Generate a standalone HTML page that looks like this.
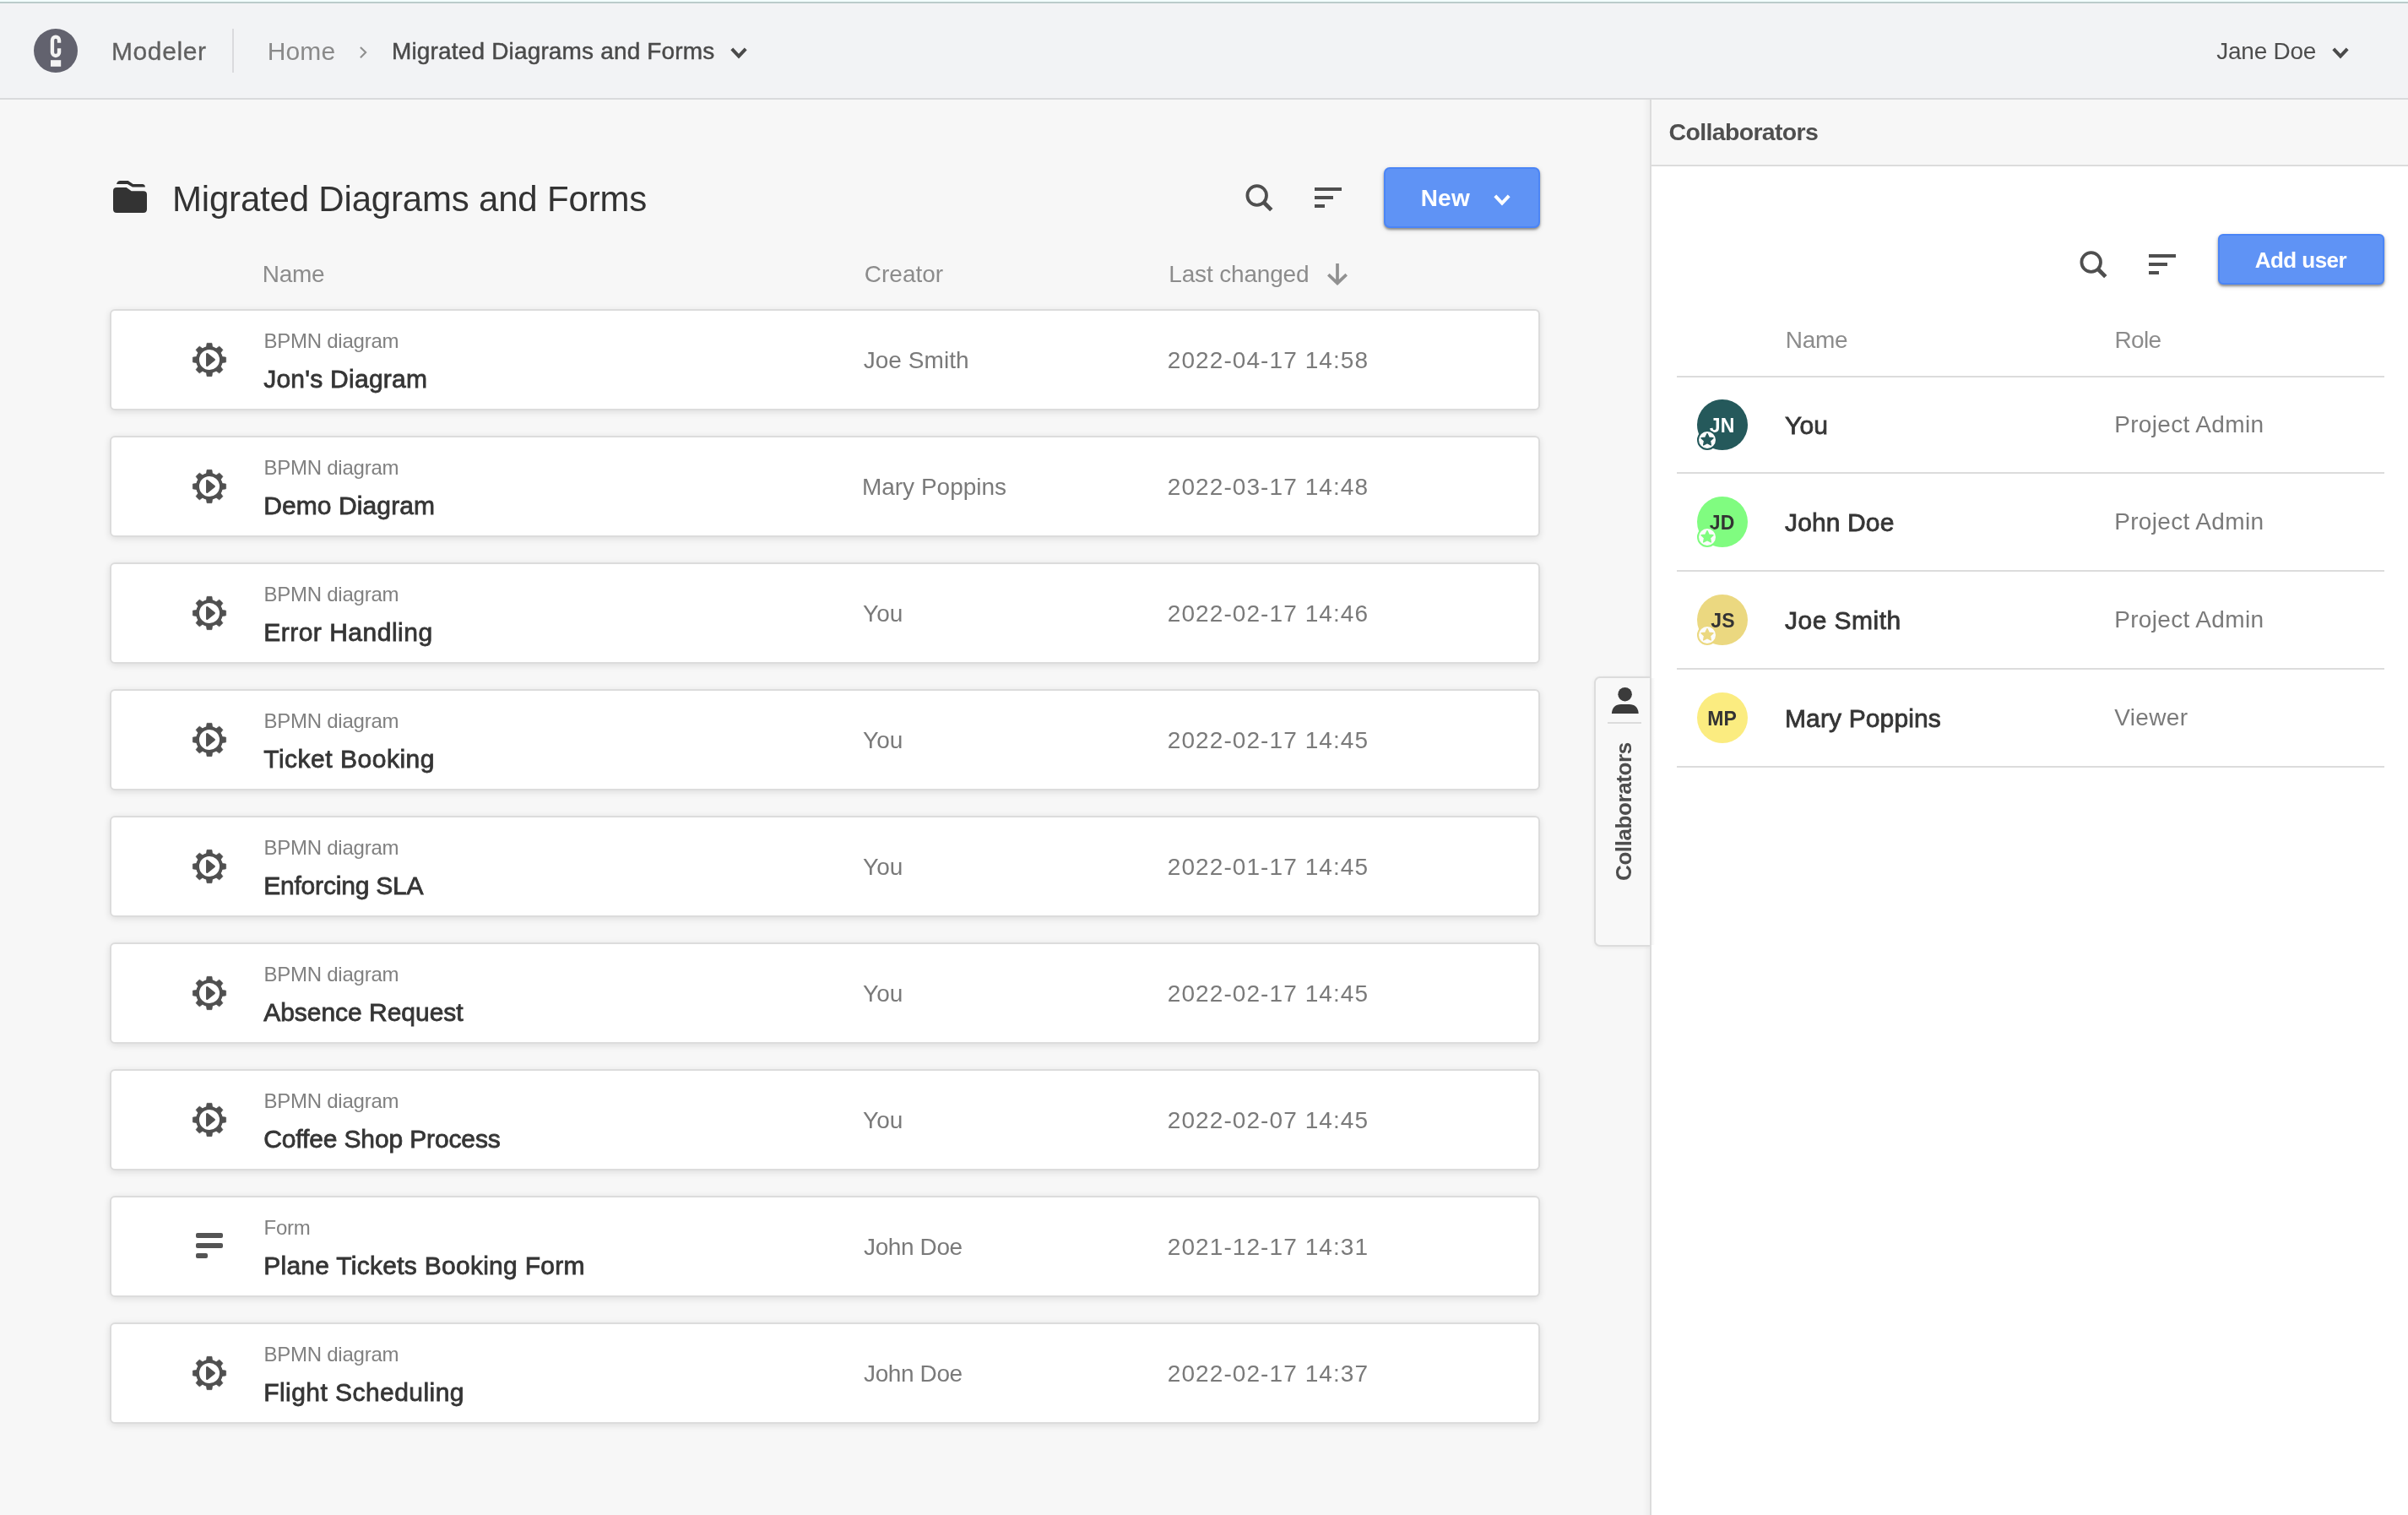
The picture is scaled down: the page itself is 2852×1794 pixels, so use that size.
<!DOCTYPE html>
<html lang="en"><head><meta charset="utf-8"><title>Modeler - Migrated Diagrams and Forms</title>
<style>
html,body{margin:0;padding:0}
body{width:2852px;height:1794px;position:relative;overflow:hidden;background:#f7f7f7;font-family:"Liberation Sans", sans-serif;}
.t{position:absolute;white-space:pre;line-height:1;}
.ic{position:absolute;display:block;overflow:visible}
.abs{position:absolute}
.card{position:absolute;left:130px;width:1694px;height:120px;box-sizing:border-box;background:#fff;border:2px solid #dcdcdc;border-radius:6px;box-shadow:0 2px 8px rgba(0,0,0,0.11);}
.btn{position:absolute;box-sizing:border-box;background:#5f93f5;border:2px solid #4b85f6;border-radius:6px;box-shadow:0 2px 3px rgba(0,0,0,0.40), 0 2px 7px rgba(0,0,0,0.12);}
.av{position:absolute;width:60px;height:60px;border-radius:50%;}
.bd{position:absolute;width:24px;height:24px;border-radius:50%;background:#fcfcfc;box-sizing:border-box;}
.hl{position:absolute;left:1986px;width:838px;height:2px;background:#dcdcdc}
#app{position:absolute;left:0;top:0;width:2852px;height:1794px;overflow:hidden;will-change:transform}
</style></head><body><div id="app">

<div class="abs" style="left:0;top:0;width:2852px;height:2px;background:#f3fffe"></div>
<div class="abs" style="left:0;top:2px;width:2852px;height:2px;background:#bbcbcb"></div>
<div class="abs" style="left:0;top:4px;width:2852px;height:112px;background:#f2f3f5"></div>
<div class="abs" style="left:0;top:116px;width:2852px;height:2px;background:#d9dadc"></div>
<div class="abs" style="left:40px;top:34px;width:52px;height:52px;border-radius:50%;background:#62626e"></div>
<svg class="ic" style="left:40px;top:34px" width="52" height="52" viewBox="0 0 52 52"><path d="M30.06,16.8 V13.73 A4.06,4.06 0 0 0 21.94,13.73 V27.96 A4.06,4.06 0 0 0 30.06,27.96 V23.3" fill="none" stroke="#f4f4f4" stroke-width="4.36"/><rect x="20" y="37.2" width="12.2" height="7.6" fill="#f4f4f4"/></svg>
<div class="t" style="left:132px;top:45.61px;font-size:30px;color:#606060;font-weight:400;letter-spacing:0.6px;-webkit-text-stroke:0.3px #606060;">Modeler</div>
<div class="abs" style="left:275px;top:34px;width:2px;height:52px;background:#dadadd"></div>
<div class="t" style="left:316.8px;top:45.61px;font-size:30px;color:#8a8a8a;font-weight:400;letter-spacing:0.1px;">Home</div>
<svg class="ic" style="left:424px;top:55px" width="12" height="16" viewBox="0 0 12 16"><path d="M2.9,0.9 L9.15,7.05 L2.9,13.2" fill="none" stroke="#8f8f8f" stroke-width="2.1"/></svg>
<div class="t" style="left:464px;top:46.80px;font-size:28px;color:#4a4a4a;font-weight:400;letter-spacing:0.16px;-webkit-text-stroke:0.45px #4a4a4a;">Migrated Diagrams and Forms</div>
<svg class="ic" style="left:863.5px;top:55px" width="22" height="14.5" viewBox="0 0 22 14.5"><path d="M2.80,2.80 L11.0,11.50 L19.20,2.80" fill="none" stroke="#4a4a4a" stroke-width="4" stroke-linejoin="miter"/></svg>
<div class="t" style="left:2625.3px;top:46.80px;font-size:28px;color:#4d4d4d;font-weight:400;letter-spacing:-0.25px;">Jane Doe</div>
<svg class="ic" style="left:2760.5px;top:55px" width="22" height="14.5" viewBox="0 0 22 14.5"><path d="M2.80,2.80 L11.0,11.50 L19.20,2.80" fill="none" stroke="#4a4a4a" stroke-width="4" stroke-linejoin="miter"/></svg>
<svg class="ic" style="left:134px;top:214px" width="40" height="38" viewBox="0 0 40 38"><path d="M4.06,3.9 Q4.9,0.1 8.6,0.1 H17.7 L23.66,4.06 H34.4 Q37.9,4.06 37.9,7.6 H22.87 L16.9,3.9 Z" fill="#333"/><path d="M0,12.2 Q0,8 4.2,8 H15.7 L21.7,12.2 H35.8 Q40,12.2 40,16.4 V33.8 Q40,38 35.8,38 H4.2 Q0,38 0,33.8 Z" fill="#333"/></svg>
<div class="t" style="left:204px;top:214.75px;font-size:42px;color:#333;font-weight:400;letter-spacing:-0.19px;">Migrated Diagrams and Forms</div>
<svg class="ic" style="left:1474.5px;top:217.5px" width="33" height="33" viewBox="0 0 33 33"><circle cx="13.7" cy="13.5" r="11.3" fill="none" stroke="#4f4f4f" stroke-width="3.8"/><path d="M21.4,21.2 L30.8,30.6" stroke="#4f4f4f" stroke-width="4.8" stroke-linecap="butt"/></svg>
<svg class="ic" style="left:1557px;top:222px" width="32" height="24" viewBox="0 0 32 24"><g fill="#4f4f4f"><rect x="0" y="0" width="32" height="4"/><rect x="0" y="10" width="22" height="4"/><rect x="0" y="20" width="12" height="4"/></g></svg>
<div class="btn" style="left:1639px;top:198px;width:185px;height:72px;border-radius:7px"></div>
<div class="t" style="left:1682.7px;top:220.50px;font-size:28px;color:#fff;font-weight:700;letter-spacing:0.2px;">New</div>
<svg class="ic" style="left:1768.3px;top:229px" width="22" height="14.5" viewBox="0 0 22 14.5"><path d="M2.80,2.80 L11.0,11.50 L19.20,2.80" fill="none" stroke="#fff" stroke-width="4" stroke-linejoin="miter"/></svg>
<div class="t" style="left:310.8px;top:311.00px;font-size:28px;color:#8c8c8c;font-weight:400;letter-spacing:-0.3px;">Name</div>
<div class="t" style="left:1023.8px;top:311.00px;font-size:28px;color:#8c8c8c;font-weight:400;">Creator</div>
<div class="t" style="left:1384.3px;top:311.00px;font-size:28px;color:#8c8c8c;font-weight:400;letter-spacing:-0.17px;">Last changed</div>
<svg class="ic" style="left:1571px;top:312px" width="26" height="26" viewBox="0 0 26 26"><path d="M13,0.05 V22 M2.3,13.1 L13,23.4 L23.7,13.1" fill="none" stroke="#919191" stroke-width="3.7"/></svg>
<div class="card" style="top:366px"></div>
<svg class="ic" style="left:228px;top:406px" width="40" height="40" viewBox="-20 -20 40 40"><g fill="#505050"><path transform="rotate(0)" d="M-2.6,-19.65 h5.2 q0.35,0 0.42,0.35 l0.68,4.6 h-7.4 l0.68,-4.6 q0.07,-0.35 0.42,-0.35z" stroke="#505050" stroke-width="0.6" stroke-linejoin="round"/><path transform="rotate(45)" d="M-2.6,-19.65 h5.2 q0.35,0 0.42,0.35 l0.68,4.6 h-7.4 l0.68,-4.6 q0.07,-0.35 0.42,-0.35z" stroke="#505050" stroke-width="0.6" stroke-linejoin="round"/><path transform="rotate(90)" d="M-2.6,-19.65 h5.2 q0.35,0 0.42,0.35 l0.68,4.6 h-7.4 l0.68,-4.6 q0.07,-0.35 0.42,-0.35z" stroke="#505050" stroke-width="0.6" stroke-linejoin="round"/><path transform="rotate(135)" d="M-2.6,-19.65 h5.2 q0.35,0 0.42,0.35 l0.68,4.6 h-7.4 l0.68,-4.6 q0.07,-0.35 0.42,-0.35z" stroke="#505050" stroke-width="0.6" stroke-linejoin="round"/><path transform="rotate(180)" d="M-2.6,-19.65 h5.2 q0.35,0 0.42,0.35 l0.68,4.6 h-7.4 l0.68,-4.6 q0.07,-0.35 0.42,-0.35z" stroke="#505050" stroke-width="0.6" stroke-linejoin="round"/><path transform="rotate(225)" d="M-2.6,-19.65 h5.2 q0.35,0 0.42,0.35 l0.68,4.6 h-7.4 l0.68,-4.6 q0.07,-0.35 0.42,-0.35z" stroke="#505050" stroke-width="0.6" stroke-linejoin="round"/><path transform="rotate(270)" d="M-2.6,-19.65 h5.2 q0.35,0 0.42,0.35 l0.68,4.6 h-7.4 l0.68,-4.6 q0.07,-0.35 0.42,-0.35z" stroke="#505050" stroke-width="0.6" stroke-linejoin="round"/><path transform="rotate(315)" d="M-2.6,-19.65 h5.2 q0.35,0 0.42,0.35 l0.68,4.6 h-7.4 l0.68,-4.6 q0.07,-0.35 0.42,-0.35z" stroke="#505050" stroke-width="0.6" stroke-linejoin="round"/></g><circle r="14" fill="none" stroke="#505050" stroke-width="3.9"/><path d="M-2.7,-6.8 L5.7,0 L-2.7,6.8 Z" fill="#505050" stroke="#505050" stroke-width="2.5" stroke-linejoin="round"/></svg>
<div class="t" style="left:312.5px;top:392.28px;font-size:24px;color:#808080;font-weight:400;letter-spacing:-0.25px;">BPMN diagram</div>
<div class="t" style="left:312.2px;top:433.61px;font-size:30px;color:#353535;font-weight:400;letter-spacing:0.25px;-webkit-text-stroke:0.8px #353535;">Jon's Diagram</div>
<div class="t" style="left:1022.7px;top:413.00px;font-size:28px;color:#7a7a7a;font-weight:400;letter-spacing:0.05px;">Joe Smith</div>
<div class="t" style="left:1382.8px;top:413.00px;font-size:28px;color:#7a7a7a;font-weight:400;letter-spacing:1.08px;">2022-04-17 14:58</div>
<div class="card" style="top:516px"></div>
<svg class="ic" style="left:228px;top:556px" width="40" height="40" viewBox="-20 -20 40 40"><g fill="#505050"><path transform="rotate(0)" d="M-2.6,-19.65 h5.2 q0.35,0 0.42,0.35 l0.68,4.6 h-7.4 l0.68,-4.6 q0.07,-0.35 0.42,-0.35z" stroke="#505050" stroke-width="0.6" stroke-linejoin="round"/><path transform="rotate(45)" d="M-2.6,-19.65 h5.2 q0.35,0 0.42,0.35 l0.68,4.6 h-7.4 l0.68,-4.6 q0.07,-0.35 0.42,-0.35z" stroke="#505050" stroke-width="0.6" stroke-linejoin="round"/><path transform="rotate(90)" d="M-2.6,-19.65 h5.2 q0.35,0 0.42,0.35 l0.68,4.6 h-7.4 l0.68,-4.6 q0.07,-0.35 0.42,-0.35z" stroke="#505050" stroke-width="0.6" stroke-linejoin="round"/><path transform="rotate(135)" d="M-2.6,-19.65 h5.2 q0.35,0 0.42,0.35 l0.68,4.6 h-7.4 l0.68,-4.6 q0.07,-0.35 0.42,-0.35z" stroke="#505050" stroke-width="0.6" stroke-linejoin="round"/><path transform="rotate(180)" d="M-2.6,-19.65 h5.2 q0.35,0 0.42,0.35 l0.68,4.6 h-7.4 l0.68,-4.6 q0.07,-0.35 0.42,-0.35z" stroke="#505050" stroke-width="0.6" stroke-linejoin="round"/><path transform="rotate(225)" d="M-2.6,-19.65 h5.2 q0.35,0 0.42,0.35 l0.68,4.6 h-7.4 l0.68,-4.6 q0.07,-0.35 0.42,-0.35z" stroke="#505050" stroke-width="0.6" stroke-linejoin="round"/><path transform="rotate(270)" d="M-2.6,-19.65 h5.2 q0.35,0 0.42,0.35 l0.68,4.6 h-7.4 l0.68,-4.6 q0.07,-0.35 0.42,-0.35z" stroke="#505050" stroke-width="0.6" stroke-linejoin="round"/><path transform="rotate(315)" d="M-2.6,-19.65 h5.2 q0.35,0 0.42,0.35 l0.68,4.6 h-7.4 l0.68,-4.6 q0.07,-0.35 0.42,-0.35z" stroke="#505050" stroke-width="0.6" stroke-linejoin="round"/></g><circle r="14" fill="none" stroke="#505050" stroke-width="3.9"/><path d="M-2.7,-6.8 L5.7,0 L-2.7,6.8 Z" fill="#505050" stroke="#505050" stroke-width="2.5" stroke-linejoin="round"/></svg>
<div class="t" style="left:312.5px;top:542.28px;font-size:24px;color:#808080;font-weight:400;letter-spacing:-0.25px;">BPMN diagram</div>
<div class="t" style="left:312.2px;top:583.61px;font-size:30px;color:#353535;font-weight:400;letter-spacing:0.09999999999999999px;-webkit-text-stroke:0.8px #353535;">Demo Diagram</div>
<div class="t" style="left:1020.9px;top:563.00px;font-size:28px;color:#7a7a7a;font-weight:400;">Mary Poppins</div>
<div class="t" style="left:1382.8px;top:563.00px;font-size:28px;color:#7a7a7a;font-weight:400;letter-spacing:1.08px;">2022-03-17 14:48</div>
<div class="card" style="top:666px"></div>
<svg class="ic" style="left:228px;top:706px" width="40" height="40" viewBox="-20 -20 40 40"><g fill="#505050"><path transform="rotate(0)" d="M-2.6,-19.65 h5.2 q0.35,0 0.42,0.35 l0.68,4.6 h-7.4 l0.68,-4.6 q0.07,-0.35 0.42,-0.35z" stroke="#505050" stroke-width="0.6" stroke-linejoin="round"/><path transform="rotate(45)" d="M-2.6,-19.65 h5.2 q0.35,0 0.42,0.35 l0.68,4.6 h-7.4 l0.68,-4.6 q0.07,-0.35 0.42,-0.35z" stroke="#505050" stroke-width="0.6" stroke-linejoin="round"/><path transform="rotate(90)" d="M-2.6,-19.65 h5.2 q0.35,0 0.42,0.35 l0.68,4.6 h-7.4 l0.68,-4.6 q0.07,-0.35 0.42,-0.35z" stroke="#505050" stroke-width="0.6" stroke-linejoin="round"/><path transform="rotate(135)" d="M-2.6,-19.65 h5.2 q0.35,0 0.42,0.35 l0.68,4.6 h-7.4 l0.68,-4.6 q0.07,-0.35 0.42,-0.35z" stroke="#505050" stroke-width="0.6" stroke-linejoin="round"/><path transform="rotate(180)" d="M-2.6,-19.65 h5.2 q0.35,0 0.42,0.35 l0.68,4.6 h-7.4 l0.68,-4.6 q0.07,-0.35 0.42,-0.35z" stroke="#505050" stroke-width="0.6" stroke-linejoin="round"/><path transform="rotate(225)" d="M-2.6,-19.65 h5.2 q0.35,0 0.42,0.35 l0.68,4.6 h-7.4 l0.68,-4.6 q0.07,-0.35 0.42,-0.35z" stroke="#505050" stroke-width="0.6" stroke-linejoin="round"/><path transform="rotate(270)" d="M-2.6,-19.65 h5.2 q0.35,0 0.42,0.35 l0.68,4.6 h-7.4 l0.68,-4.6 q0.07,-0.35 0.42,-0.35z" stroke="#505050" stroke-width="0.6" stroke-linejoin="round"/><path transform="rotate(315)" d="M-2.6,-19.65 h5.2 q0.35,0 0.42,0.35 l0.68,4.6 h-7.4 l0.68,-4.6 q0.07,-0.35 0.42,-0.35z" stroke="#505050" stroke-width="0.6" stroke-linejoin="round"/></g><circle r="14" fill="none" stroke="#505050" stroke-width="3.9"/><path d="M-2.7,-6.8 L5.7,0 L-2.7,6.8 Z" fill="#505050" stroke="#505050" stroke-width="2.5" stroke-linejoin="round"/></svg>
<div class="t" style="left:312.5px;top:692.28px;font-size:24px;color:#808080;font-weight:400;letter-spacing:-0.25px;">BPMN diagram</div>
<div class="t" style="left:312.2px;top:733.61px;font-size:30px;color:#353535;font-weight:400;letter-spacing:0.5px;-webkit-text-stroke:0.8px #353535;">Error Handling</div>
<div class="t" style="left:1022.1px;top:713.00px;font-size:28px;color:#7a7a7a;font-weight:400;">You</div>
<div class="t" style="left:1382.8px;top:713.00px;font-size:28px;color:#7a7a7a;font-weight:400;letter-spacing:1.08px;">2022-02-17 14:46</div>
<div class="card" style="top:816px"></div>
<svg class="ic" style="left:228px;top:856px" width="40" height="40" viewBox="-20 -20 40 40"><g fill="#505050"><path transform="rotate(0)" d="M-2.6,-19.65 h5.2 q0.35,0 0.42,0.35 l0.68,4.6 h-7.4 l0.68,-4.6 q0.07,-0.35 0.42,-0.35z" stroke="#505050" stroke-width="0.6" stroke-linejoin="round"/><path transform="rotate(45)" d="M-2.6,-19.65 h5.2 q0.35,0 0.42,0.35 l0.68,4.6 h-7.4 l0.68,-4.6 q0.07,-0.35 0.42,-0.35z" stroke="#505050" stroke-width="0.6" stroke-linejoin="round"/><path transform="rotate(90)" d="M-2.6,-19.65 h5.2 q0.35,0 0.42,0.35 l0.68,4.6 h-7.4 l0.68,-4.6 q0.07,-0.35 0.42,-0.35z" stroke="#505050" stroke-width="0.6" stroke-linejoin="round"/><path transform="rotate(135)" d="M-2.6,-19.65 h5.2 q0.35,0 0.42,0.35 l0.68,4.6 h-7.4 l0.68,-4.6 q0.07,-0.35 0.42,-0.35z" stroke="#505050" stroke-width="0.6" stroke-linejoin="round"/><path transform="rotate(180)" d="M-2.6,-19.65 h5.2 q0.35,0 0.42,0.35 l0.68,4.6 h-7.4 l0.68,-4.6 q0.07,-0.35 0.42,-0.35z" stroke="#505050" stroke-width="0.6" stroke-linejoin="round"/><path transform="rotate(225)" d="M-2.6,-19.65 h5.2 q0.35,0 0.42,0.35 l0.68,4.6 h-7.4 l0.68,-4.6 q0.07,-0.35 0.42,-0.35z" stroke="#505050" stroke-width="0.6" stroke-linejoin="round"/><path transform="rotate(270)" d="M-2.6,-19.65 h5.2 q0.35,0 0.42,0.35 l0.68,4.6 h-7.4 l0.68,-4.6 q0.07,-0.35 0.42,-0.35z" stroke="#505050" stroke-width="0.6" stroke-linejoin="round"/><path transform="rotate(315)" d="M-2.6,-19.65 h5.2 q0.35,0 0.42,0.35 l0.68,4.6 h-7.4 l0.68,-4.6 q0.07,-0.35 0.42,-0.35z" stroke="#505050" stroke-width="0.6" stroke-linejoin="round"/></g><circle r="14" fill="none" stroke="#505050" stroke-width="3.9"/><path d="M-2.7,-6.8 L5.7,0 L-2.7,6.8 Z" fill="#505050" stroke="#505050" stroke-width="2.5" stroke-linejoin="round"/></svg>
<div class="t" style="left:312.5px;top:842.28px;font-size:24px;color:#808080;font-weight:400;letter-spacing:-0.25px;">BPMN diagram</div>
<div class="t" style="left:312.2px;top:883.61px;font-size:30px;color:#353535;font-weight:400;letter-spacing:0.51px;-webkit-text-stroke:0.8px #353535;">Ticket Booking</div>
<div class="t" style="left:1022.1px;top:863.00px;font-size:28px;color:#7a7a7a;font-weight:400;">You</div>
<div class="t" style="left:1382.8px;top:863.00px;font-size:28px;color:#7a7a7a;font-weight:400;letter-spacing:1.08px;">2022-02-17 14:45</div>
<div class="card" style="top:966px"></div>
<svg class="ic" style="left:228px;top:1006px" width="40" height="40" viewBox="-20 -20 40 40"><g fill="#505050"><path transform="rotate(0)" d="M-2.6,-19.65 h5.2 q0.35,0 0.42,0.35 l0.68,4.6 h-7.4 l0.68,-4.6 q0.07,-0.35 0.42,-0.35z" stroke="#505050" stroke-width="0.6" stroke-linejoin="round"/><path transform="rotate(45)" d="M-2.6,-19.65 h5.2 q0.35,0 0.42,0.35 l0.68,4.6 h-7.4 l0.68,-4.6 q0.07,-0.35 0.42,-0.35z" stroke="#505050" stroke-width="0.6" stroke-linejoin="round"/><path transform="rotate(90)" d="M-2.6,-19.65 h5.2 q0.35,0 0.42,0.35 l0.68,4.6 h-7.4 l0.68,-4.6 q0.07,-0.35 0.42,-0.35z" stroke="#505050" stroke-width="0.6" stroke-linejoin="round"/><path transform="rotate(135)" d="M-2.6,-19.65 h5.2 q0.35,0 0.42,0.35 l0.68,4.6 h-7.4 l0.68,-4.6 q0.07,-0.35 0.42,-0.35z" stroke="#505050" stroke-width="0.6" stroke-linejoin="round"/><path transform="rotate(180)" d="M-2.6,-19.65 h5.2 q0.35,0 0.42,0.35 l0.68,4.6 h-7.4 l0.68,-4.6 q0.07,-0.35 0.42,-0.35z" stroke="#505050" stroke-width="0.6" stroke-linejoin="round"/><path transform="rotate(225)" d="M-2.6,-19.65 h5.2 q0.35,0 0.42,0.35 l0.68,4.6 h-7.4 l0.68,-4.6 q0.07,-0.35 0.42,-0.35z" stroke="#505050" stroke-width="0.6" stroke-linejoin="round"/><path transform="rotate(270)" d="M-2.6,-19.65 h5.2 q0.35,0 0.42,0.35 l0.68,4.6 h-7.4 l0.68,-4.6 q0.07,-0.35 0.42,-0.35z" stroke="#505050" stroke-width="0.6" stroke-linejoin="round"/><path transform="rotate(315)" d="M-2.6,-19.65 h5.2 q0.35,0 0.42,0.35 l0.68,4.6 h-7.4 l0.68,-4.6 q0.07,-0.35 0.42,-0.35z" stroke="#505050" stroke-width="0.6" stroke-linejoin="round"/></g><circle r="14" fill="none" stroke="#505050" stroke-width="3.9"/><path d="M-2.7,-6.8 L5.7,0 L-2.7,6.8 Z" fill="#505050" stroke="#505050" stroke-width="2.5" stroke-linejoin="round"/></svg>
<div class="t" style="left:312.5px;top:992.28px;font-size:24px;color:#808080;font-weight:400;letter-spacing:-0.25px;">BPMN diagram</div>
<div class="t" style="left:312.2px;top:1033.61px;font-size:30px;color:#353535;font-weight:400;letter-spacing:-0.19999999999999998px;-webkit-text-stroke:0.8px #353535;">Enforcing SLA</div>
<div class="t" style="left:1022.1px;top:1013.00px;font-size:28px;color:#7a7a7a;font-weight:400;">You</div>
<div class="t" style="left:1382.8px;top:1013.00px;font-size:28px;color:#7a7a7a;font-weight:400;letter-spacing:1.08px;">2022-01-17 14:45</div>
<div class="card" style="top:1116px"></div>
<svg class="ic" style="left:228px;top:1156px" width="40" height="40" viewBox="-20 -20 40 40"><g fill="#505050"><path transform="rotate(0)" d="M-2.6,-19.65 h5.2 q0.35,0 0.42,0.35 l0.68,4.6 h-7.4 l0.68,-4.6 q0.07,-0.35 0.42,-0.35z" stroke="#505050" stroke-width="0.6" stroke-linejoin="round"/><path transform="rotate(45)" d="M-2.6,-19.65 h5.2 q0.35,0 0.42,0.35 l0.68,4.6 h-7.4 l0.68,-4.6 q0.07,-0.35 0.42,-0.35z" stroke="#505050" stroke-width="0.6" stroke-linejoin="round"/><path transform="rotate(90)" d="M-2.6,-19.65 h5.2 q0.35,0 0.42,0.35 l0.68,4.6 h-7.4 l0.68,-4.6 q0.07,-0.35 0.42,-0.35z" stroke="#505050" stroke-width="0.6" stroke-linejoin="round"/><path transform="rotate(135)" d="M-2.6,-19.65 h5.2 q0.35,0 0.42,0.35 l0.68,4.6 h-7.4 l0.68,-4.6 q0.07,-0.35 0.42,-0.35z" stroke="#505050" stroke-width="0.6" stroke-linejoin="round"/><path transform="rotate(180)" d="M-2.6,-19.65 h5.2 q0.35,0 0.42,0.35 l0.68,4.6 h-7.4 l0.68,-4.6 q0.07,-0.35 0.42,-0.35z" stroke="#505050" stroke-width="0.6" stroke-linejoin="round"/><path transform="rotate(225)" d="M-2.6,-19.65 h5.2 q0.35,0 0.42,0.35 l0.68,4.6 h-7.4 l0.68,-4.6 q0.07,-0.35 0.42,-0.35z" stroke="#505050" stroke-width="0.6" stroke-linejoin="round"/><path transform="rotate(270)" d="M-2.6,-19.65 h5.2 q0.35,0 0.42,0.35 l0.68,4.6 h-7.4 l0.68,-4.6 q0.07,-0.35 0.42,-0.35z" stroke="#505050" stroke-width="0.6" stroke-linejoin="round"/><path transform="rotate(315)" d="M-2.6,-19.65 h5.2 q0.35,0 0.42,0.35 l0.68,4.6 h-7.4 l0.68,-4.6 q0.07,-0.35 0.42,-0.35z" stroke="#505050" stroke-width="0.6" stroke-linejoin="round"/></g><circle r="14" fill="none" stroke="#505050" stroke-width="3.9"/><path d="M-2.7,-6.8 L5.7,0 L-2.7,6.8 Z" fill="#505050" stroke="#505050" stroke-width="2.5" stroke-linejoin="round"/></svg>
<div class="t" style="left:312.5px;top:1142.28px;font-size:24px;color:#808080;font-weight:400;letter-spacing:-0.25px;">BPMN diagram</div>
<div class="t" style="left:312.2px;top:1183.61px;font-size:30px;color:#353535;font-weight:400;letter-spacing:-0.03px;-webkit-text-stroke:0.8px #353535;">Absence Request</div>
<div class="t" style="left:1022.1px;top:1163.00px;font-size:28px;color:#7a7a7a;font-weight:400;">You</div>
<div class="t" style="left:1382.8px;top:1163.00px;font-size:28px;color:#7a7a7a;font-weight:400;letter-spacing:1.08px;">2022-02-17 14:45</div>
<div class="card" style="top:1266px"></div>
<svg class="ic" style="left:228px;top:1306px" width="40" height="40" viewBox="-20 -20 40 40"><g fill="#505050"><path transform="rotate(0)" d="M-2.6,-19.65 h5.2 q0.35,0 0.42,0.35 l0.68,4.6 h-7.4 l0.68,-4.6 q0.07,-0.35 0.42,-0.35z" stroke="#505050" stroke-width="0.6" stroke-linejoin="round"/><path transform="rotate(45)" d="M-2.6,-19.65 h5.2 q0.35,0 0.42,0.35 l0.68,4.6 h-7.4 l0.68,-4.6 q0.07,-0.35 0.42,-0.35z" stroke="#505050" stroke-width="0.6" stroke-linejoin="round"/><path transform="rotate(90)" d="M-2.6,-19.65 h5.2 q0.35,0 0.42,0.35 l0.68,4.6 h-7.4 l0.68,-4.6 q0.07,-0.35 0.42,-0.35z" stroke="#505050" stroke-width="0.6" stroke-linejoin="round"/><path transform="rotate(135)" d="M-2.6,-19.65 h5.2 q0.35,0 0.42,0.35 l0.68,4.6 h-7.4 l0.68,-4.6 q0.07,-0.35 0.42,-0.35z" stroke="#505050" stroke-width="0.6" stroke-linejoin="round"/><path transform="rotate(180)" d="M-2.6,-19.65 h5.2 q0.35,0 0.42,0.35 l0.68,4.6 h-7.4 l0.68,-4.6 q0.07,-0.35 0.42,-0.35z" stroke="#505050" stroke-width="0.6" stroke-linejoin="round"/><path transform="rotate(225)" d="M-2.6,-19.65 h5.2 q0.35,0 0.42,0.35 l0.68,4.6 h-7.4 l0.68,-4.6 q0.07,-0.35 0.42,-0.35z" stroke="#505050" stroke-width="0.6" stroke-linejoin="round"/><path transform="rotate(270)" d="M-2.6,-19.65 h5.2 q0.35,0 0.42,0.35 l0.68,4.6 h-7.4 l0.68,-4.6 q0.07,-0.35 0.42,-0.35z" stroke="#505050" stroke-width="0.6" stroke-linejoin="round"/><path transform="rotate(315)" d="M-2.6,-19.65 h5.2 q0.35,0 0.42,0.35 l0.68,4.6 h-7.4 l0.68,-4.6 q0.07,-0.35 0.42,-0.35z" stroke="#505050" stroke-width="0.6" stroke-linejoin="round"/></g><circle r="14" fill="none" stroke="#505050" stroke-width="3.9"/><path d="M-2.7,-6.8 L5.7,0 L-2.7,6.8 Z" fill="#505050" stroke="#505050" stroke-width="2.5" stroke-linejoin="round"/></svg>
<div class="t" style="left:312.5px;top:1292.28px;font-size:24px;color:#808080;font-weight:400;letter-spacing:-0.25px;">BPMN diagram</div>
<div class="t" style="left:312.2px;top:1333.61px;font-size:30px;color:#353535;font-weight:400;letter-spacing:-0.13px;-webkit-text-stroke:0.8px #353535;">Coffee Shop Process</div>
<div class="t" style="left:1022.1px;top:1313.00px;font-size:28px;color:#7a7a7a;font-weight:400;">You</div>
<div class="t" style="left:1382.8px;top:1313.00px;font-size:28px;color:#7a7a7a;font-weight:400;letter-spacing:1.08px;">2022-02-07 14:45</div>
<div class="card" style="top:1416px"></div>
<svg class="ic" style="left:232px;top:1460px" width="32" height="30" viewBox="0 0 32 30"><g fill="#545454"><rect x="0" y="0" width="32" height="6" rx="2"/><rect x="0" y="12" width="32" height="6" rx="2"/><rect x="0" y="24" width="14" height="6" rx="2"/></g></svg>
<div class="t" style="left:312.5px;top:1442.28px;font-size:24px;color:#808080;font-weight:400;letter-spacing:-0.25px;">Form</div>
<div class="t" style="left:312.2px;top:1483.61px;font-size:30px;color:#353535;font-weight:400;letter-spacing:0.26999999999999996px;-webkit-text-stroke:0.8px #353535;">Plane Tickets Booking Form</div>
<div class="t" style="left:1023.1px;top:1463.00px;font-size:28px;color:#7a7a7a;font-weight:400;letter-spacing:-0.4px;">John Doe</div>
<div class="t" style="left:1382.8px;top:1463.00px;font-size:28px;color:#7a7a7a;font-weight:400;letter-spacing:1.08px;">2021-12-17 14:31</div>
<div class="card" style="top:1566px"></div>
<svg class="ic" style="left:228px;top:1606px" width="40" height="40" viewBox="-20 -20 40 40"><g fill="#505050"><path transform="rotate(0)" d="M-2.6,-19.65 h5.2 q0.35,0 0.42,0.35 l0.68,4.6 h-7.4 l0.68,-4.6 q0.07,-0.35 0.42,-0.35z" stroke="#505050" stroke-width="0.6" stroke-linejoin="round"/><path transform="rotate(45)" d="M-2.6,-19.65 h5.2 q0.35,0 0.42,0.35 l0.68,4.6 h-7.4 l0.68,-4.6 q0.07,-0.35 0.42,-0.35z" stroke="#505050" stroke-width="0.6" stroke-linejoin="round"/><path transform="rotate(90)" d="M-2.6,-19.65 h5.2 q0.35,0 0.42,0.35 l0.68,4.6 h-7.4 l0.68,-4.6 q0.07,-0.35 0.42,-0.35z" stroke="#505050" stroke-width="0.6" stroke-linejoin="round"/><path transform="rotate(135)" d="M-2.6,-19.65 h5.2 q0.35,0 0.42,0.35 l0.68,4.6 h-7.4 l0.68,-4.6 q0.07,-0.35 0.42,-0.35z" stroke="#505050" stroke-width="0.6" stroke-linejoin="round"/><path transform="rotate(180)" d="M-2.6,-19.65 h5.2 q0.35,0 0.42,0.35 l0.68,4.6 h-7.4 l0.68,-4.6 q0.07,-0.35 0.42,-0.35z" stroke="#505050" stroke-width="0.6" stroke-linejoin="round"/><path transform="rotate(225)" d="M-2.6,-19.65 h5.2 q0.35,0 0.42,0.35 l0.68,4.6 h-7.4 l0.68,-4.6 q0.07,-0.35 0.42,-0.35z" stroke="#505050" stroke-width="0.6" stroke-linejoin="round"/><path transform="rotate(270)" d="M-2.6,-19.65 h5.2 q0.35,0 0.42,0.35 l0.68,4.6 h-7.4 l0.68,-4.6 q0.07,-0.35 0.42,-0.35z" stroke="#505050" stroke-width="0.6" stroke-linejoin="round"/><path transform="rotate(315)" d="M-2.6,-19.65 h5.2 q0.35,0 0.42,0.35 l0.68,4.6 h-7.4 l0.68,-4.6 q0.07,-0.35 0.42,-0.35z" stroke="#505050" stroke-width="0.6" stroke-linejoin="round"/></g><circle r="14" fill="none" stroke="#505050" stroke-width="3.9"/><path d="M-2.7,-6.8 L5.7,0 L-2.7,6.8 Z" fill="#505050" stroke="#505050" stroke-width="2.5" stroke-linejoin="round"/></svg>
<div class="t" style="left:312.5px;top:1592.28px;font-size:24px;color:#808080;font-weight:400;letter-spacing:-0.25px;">BPMN diagram</div>
<div class="t" style="left:312.2px;top:1633.61px;font-size:30px;color:#353535;font-weight:400;letter-spacing:0.44999999999999996px;-webkit-text-stroke:0.8px #353535;">Flight Scheduling</div>
<div class="t" style="left:1023.1px;top:1613.00px;font-size:28px;color:#7a7a7a;font-weight:400;letter-spacing:-0.4px;">John Doe</div>
<div class="t" style="left:1382.8px;top:1613.00px;font-size:28px;color:#7a7a7a;font-weight:400;letter-spacing:1.08px;">2022-02-17 14:37</div>
<div class="abs" style="left:1946px;top:118px;width:8px;height:1676px;background:linear-gradient(to right, rgba(0,0,0,0), rgba(0,0,0,0.035))"></div>
<div class="abs" style="left:1888px;top:801px;width:68px;height:320px;box-sizing:border-box;background:#f8f8f8;border:2px solid #dcdcdc;border-right:none;border-radius:7px 0 0 7px;box-shadow:0 1px 5px rgba(0,0,0,0.07)"></div>
<svg class="ic" style="left:1908px;top:814px" width="33" height="32" viewBox="0 0 33 32"><circle cx="16.6" cy="8.2" r="8.25" fill="#3b3b3b"/><path d="M0.9,30.9 C1.3,24 5.5,20.1 12,20.1 H21.6 C28.1,20.1 32.3,24 32.7,30.9 Z" fill="#3b3b3b"/></svg>
<div class="abs" style="left:1904px;top:855px;width:40px;height:2px;background:#dcdcdc"></div>
<div class="t" style="left:1910px;top:1043px;font-size:26px;font-weight:700;color:#4d4d4d;transform-origin:0 0;transform:rotate(-90deg);letter-spacing:-0.4px;line-height:26px">Collaborators</div>
<div class="abs" style="left:1954px;top:118px;width:2px;height:1676px;background:#dcdcdc"></div>
<div class="abs" style="left:1956px;top:118px;width:896px;height:77px;background:#f7f7f7"></div>
<div class="abs" style="left:1956px;top:195px;width:896px;height:2px;background:#dcdcdc"></div>
<div class="abs" style="left:1956px;top:197px;width:896px;height:1597px;background:#fff"></div>
<div class="abs" style="left:1956px;top:803px;width:4px;height:316px;background:linear-gradient(to right, rgba(0,0,0,0.05), rgba(0,0,0,0))"></div>
<div class="t" style="left:1976.5px;top:142.17px;font-size:28.5px;color:#4f4f4f;font-weight:700;letter-spacing:-0.66px;">Collaborators</div>
<svg class="ic" style="left:2463px;top:297px" width="33" height="33" viewBox="0 0 33 33"><circle cx="13.7" cy="13.5" r="11.3" fill="none" stroke="#4f4f4f" stroke-width="3.8"/><path d="M21.4,21.2 L30.8,30.6" stroke="#4f4f4f" stroke-width="4.8" stroke-linecap="butt"/></svg>
<svg class="ic" style="left:2545px;top:301px" width="32" height="24" viewBox="0 0 32 24"><g fill="#4f4f4f"><rect x="0" y="0" width="32" height="4"/><rect x="0" y="10" width="22" height="4"/><rect x="0" y="20" width="12" height="4"/></g></svg>
<div class="btn" style="left:2627px;top:277px;width:197px;height:60px"></div>
<div class="t" style="left:2670.8px;top:295.09px;font-size:26px;color:#fff;font-weight:700;letter-spacing:-0.55px;">Add user</div>
<div class="t" style="left:2114.8px;top:388.60px;font-size:28px;color:#8c8c8c;font-weight:400;letter-spacing:-0.3px;">Name</div>
<div class="t" style="left:2504.5px;top:388.60px;font-size:28px;color:#8c8c8c;font-weight:400;letter-spacing:-0.7px;">Role</div>
<div class="hl" style="top:445px"></div>
<div class="av" style="left:2010px;top:473px;background:#25595b"></div>
<div class="t" style="left:2010px;top:473px;width:60px;height:60px;line-height:63px;text-align:center;font-size:23px;font-weight:700;color:#fff;letter-spacing:0.3px;text-indent:-0.6px">JN</div>
<div class="bd" style="left:2010px;top:509px;border:2px solid #25595b"></div>
<svg class="ic" style="left:2010px;top:509.2px" width="24" height="24" viewBox="-12 -12 24 24"><path d="M0.00,-7.40 L2.15,-2.95 L7.04,-2.29 L3.47,1.13 L4.35,5.99 L0.00,3.65 L-4.35,5.99 L-3.47,1.13 L-7.04,-2.29 L-2.15,-2.95 Z" fill="#25595b" stroke="#25595b" stroke-width="1.3" stroke-linejoin="round"/></svg>
<div class="t" style="left:2114.0px;top:489.00px;font-size:30px;color:#353535;font-weight:400;letter-spacing:0.13px;-webkit-text-stroke:0.8px #353535;">You</div>
<div class="t" style="left:2504.2px;top:489.10px;font-size:28px;color:#7a7a7a;font-weight:400;letter-spacing:0.34px;">Project Admin</div>
<div class="hl" style="top:559px"></div>
<div class="av" style="left:2010px;top:588px;background:#80fc80"></div>
<div class="t" style="left:2010px;top:588px;width:60px;height:60px;line-height:63px;text-align:center;font-size:23px;font-weight:700;color:#333;letter-spacing:0.3px;text-indent:-0.6px">JD</div>
<div class="bd" style="left:2010px;top:624px;border:2px solid #80fc80"></div>
<svg class="ic" style="left:2010px;top:624.2px" width="24" height="24" viewBox="-12 -12 24 24"><path d="M0.00,-7.40 L2.15,-2.95 L7.04,-2.29 L3.47,1.13 L4.35,5.99 L0.00,3.65 L-4.35,5.99 L-3.47,1.13 L-7.04,-2.29 L-2.15,-2.95 Z" fill="#80fc80" stroke="#80fc80" stroke-width="1.3" stroke-linejoin="round"/></svg>
<div class="t" style="left:2114.0px;top:604.00px;font-size:30px;color:#353535;font-weight:400;letter-spacing:0.13px;-webkit-text-stroke:0.8px #353535;">John Doe</div>
<div class="t" style="left:2504.2px;top:604.10px;font-size:28px;color:#7a7a7a;font-weight:400;letter-spacing:0.34px;">Project Admin</div>
<div class="hl" style="top:675px"></div>
<div class="av" style="left:2010px;top:704px;background:#ebd880"></div>
<div class="t" style="left:2010px;top:704px;width:60px;height:60px;line-height:63px;text-align:center;font-size:23px;font-weight:700;color:#333;letter-spacing:0.3px;text-indent:1.0px">JS</div>
<div class="bd" style="left:2010px;top:740px;border:2px solid #ebd880"></div>
<svg class="ic" style="left:2010px;top:740.2px" width="24" height="24" viewBox="-12 -12 24 24"><path d="M0.00,-7.40 L2.15,-2.95 L7.04,-2.29 L3.47,1.13 L4.35,5.99 L0.00,3.65 L-4.35,5.99 L-3.47,1.13 L-7.04,-2.29 L-2.15,-2.95 Z" fill="#ebd880" stroke="#ebd880" stroke-width="1.3" stroke-linejoin="round"/></svg>
<div class="t" style="left:2114.0px;top:720.00px;font-size:30px;color:#353535;font-weight:400;letter-spacing:0.48px;-webkit-text-stroke:0.8px #353535;">Joe Smith</div>
<div class="t" style="left:2504.2px;top:720.10px;font-size:28px;color:#7a7a7a;font-weight:400;letter-spacing:0.34px;">Project Admin</div>
<div class="hl" style="top:791px"></div>
<div class="av" style="left:2010px;top:820px;background:#fbec80"></div>
<div class="t" style="left:2010px;top:820px;width:60px;height:60px;line-height:63px;text-align:center;font-size:23px;font-weight:700;color:#333;letter-spacing:0.3px;text-indent:-0.6px">MP</div>
<div class="t" style="left:2114.0px;top:836.00px;font-size:30px;color:#353535;font-weight:400;letter-spacing:0.13px;-webkit-text-stroke:0.8px #353535;">Mary Poppins</div>
<div class="t" style="left:2504.2px;top:836.10px;font-size:28px;color:#7a7a7a;font-weight:400;letter-spacing:0.34px;">Viewer</div>
<div class="hl" style="top:907px"></div>
</div></body></html>
